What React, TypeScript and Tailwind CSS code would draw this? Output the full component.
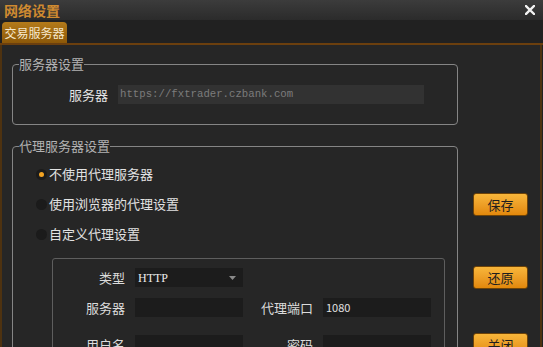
import React from 'react';

function Radio({ checked, label }: { checked?: boolean; label: string }) {
  return (
    <div className="flex h-[30px] items-center">
      <span className="ml-[23px] flex h-[11px] w-[11px] items-center justify-center rounded-full bg-[#1b1b1b]">
        {checked && <span className="h-[5px] w-[5px] rounded-full bg-[#f2a322]" />}
      </span>
      <span className="ml-[2px] text-[13px] leading-[16px] text-[#e2e2e2]">{label}</span>
    </div>
  );
}

function Field({ label, labelW, value, select }: { label: string; labelW: string; value?: string; select?: boolean }) {
  return (
    <div className="flex items-center">
      <span className={`${labelW} text-right text-[13px] leading-[16px] text-[#dcdcdc]`}>{label}</span>
      <div className="ml-[10px] flex h-[19px] w-[108px] items-center justify-between bg-[#1c1c1c] pl-[3px] pr-[7px]">
        <span className={select ? "font-['Liberation_Serif',serif] text-[12px] text-[#ececec]" : 'text-[11px] text-[#e0e0e0]'}>
          {value}
        </span>
        {select && (
          <svg width="7" height="4" viewBox="0 0 7 4">
            <path d="M0 0 L7 0 L3.5 4 Z" fill="#8a8a8a" />
          </svg>
        )}
      </div>
    </div>
  );
}

function OrangeButton({ text }: { text: string }) {
  return (
    <button className="flex h-[23px] w-[55px] items-center justify-center rounded-[3px] border border-[#6e4308] bg-gradient-to-b from-[#f8b63a] to-[#e2880a] text-[13px] leading-none text-[#1e1e1e]">
      {text}
    </button>
  );
}

export default function App() {
  return (
    <div className="flex h-[347px] w-[543px] flex-col overflow-hidden bg-[#212121] font-['Noto_Sans_CJK_SC',sans-serif]">
      {/* Title bar */}
      <div className="flex h-[20px] shrink-0 items-center justify-between bg-gradient-to-b from-[#3c3c3c] to-[#2b2b2b] pl-[4px] pr-[8px]">
        <span className="text-[14px] font-bold leading-none text-[#cf8a30]">网络设置</span>
        <svg width="10" height="10" viewBox="0 0 10 10">
          <path d="M1 1 L9 9 M9 1 L1 9" stroke="#f2f2f2" strokeWidth="2.4" strokeLinecap="square" />
        </svg>
      </div>

      {/* Tabs */}
      <div className="flex h-[23px] shrink-0 items-end pl-[2px]">
        <div className="flex h-[21px] w-[65px] items-center justify-center rounded-t-[4px] bg-gradient-to-b from-[#b47b1a] to-[#8c5808] text-[12px] leading-none text-[#f6e8cc]">
          交易服务器
        </div>
      </div>
      <div className="h-[2px] shrink-0 bg-[#6b3f0e]" />

      {/* Content */}
      <div className="flex min-h-0 w-[542px] flex-1 overflow-hidden border-l-2 border-r-2 border-[#4e3210] bg-[#262626]">
        <div className="ml-[10px] w-[446px] shrink-0">
          <fieldset className="mt-[11px] rounded-[4px] border border-[#858585] pb-[20px]">
            <legend className="ml-[6px] text-[13px] leading-[16px] text-[#b2b2b2]">服务器设置</legend>
            <div className="mt-[13px] flex items-center">
              <span className="w-[95px] text-right text-[13px] leading-[16px] text-[#e4e4e4]">服务器</span>
              <div className="ml-[10px] flex h-[19px] w-[306px] items-center bg-[#323232] pl-[2px] font-['Liberation_Mono',monospace] text-[10.7px] text-[#7c7c7c]">
                https://fxtrader.czbank.com
              </div>
            </div>
          </fieldset>

          <fieldset className="mt-[13px] h-[260px] rounded-[4px] border border-[#858585]">
            <legend className="ml-[6px] text-[13px] leading-[16px] text-[#b2b2b2]">代理服务器设置</legend>
            <div className="mt-[5px]">
              <Radio checked label="不使用代理服务器" />
              <Radio label="使用浏览器的代理设置" />
              <Radio label="自定义代理设置" />
            </div>
            <div className="ml-[39px] mt-[9px] h-[120px] w-[393px] rounded-[3px] border border-[#5e5e5e] pt-[9px]">
              <Field label="类型" labelW="w-[72px]" value="HTTP" select />
              <div className="mt-[11px] flex items-center">
                <Field label="服务器" labelW="w-[72px]" />
                <Field label="代理端口" labelW="w-[70px]" value="1080" />
              </div>
              <div className="mt-[18px] flex items-center">
                <Field label="用户名" labelW="w-[72px]" />
                <Field label="密码" labelW="w-[70px]" />
              </div>
            </div>
          </fieldset>
        </div>

        <div className="ml-[15px] flex flex-col">
          <div className="mt-[148px]">
            <OrangeButton text="保存" />
          </div>
          <div className="mt-[50px]">
            <OrangeButton text="还原" />
          </div>
          <div className="mt-[44px]">
            <OrangeButton text="关闭" />
          </div>
        </div>
      </div>
    </div>
  );
}
